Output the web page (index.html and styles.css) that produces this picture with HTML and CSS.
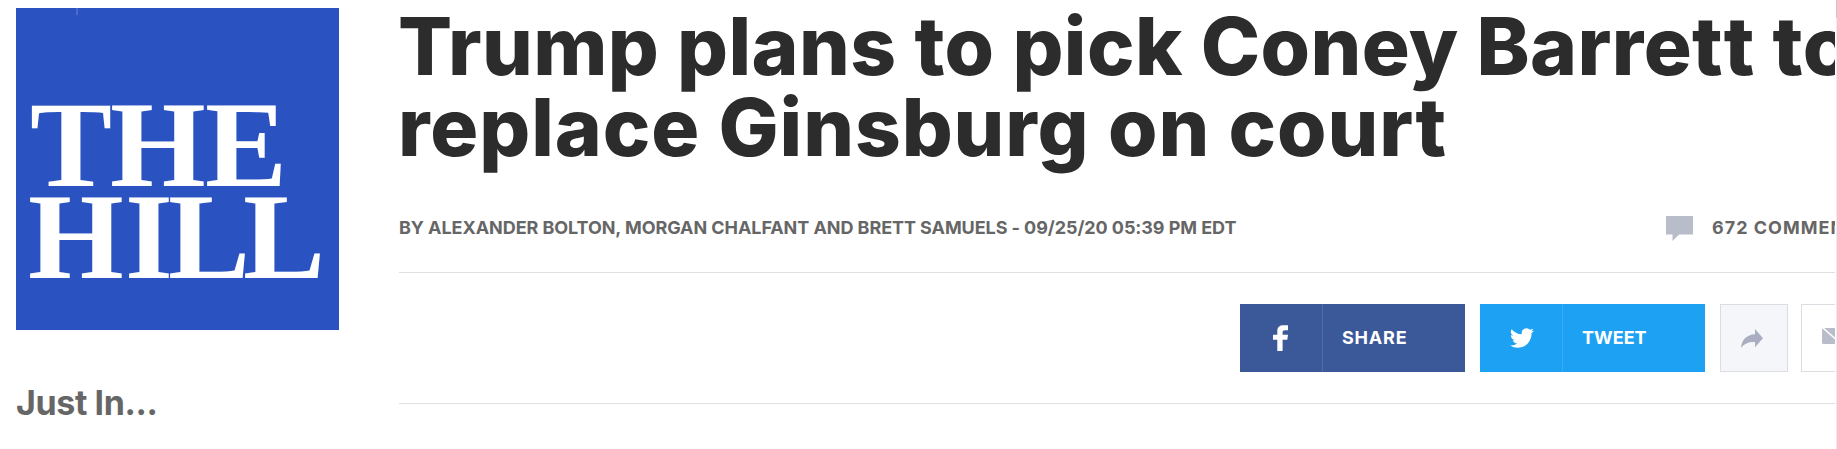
FILE: index.html
```
<!DOCTYPE html>
<html lang="en">
<head>
    <meta charset="UTF-8">
    <meta name="viewport" content="width=device-width, initial-scale=1.0">
    <title>The Hill</title>
    <link rel="stylesheet" href="styles.css">
</head>
<body>
    <div class="page">
        <aside class="sidebar">
            <svg class="logo" viewBox="0 0 323 322">
                <rect width="323" height="322" fill="#2a53c1"/>
                <rect x="60" y="0" width="2" height="7" fill="#4a6bc8"/>
                <text x="14 94 189" y="178">THE</text>
                <text x="12 109 152 227" y="269.500">HILL</text>
            </svg>
            <h2 class="justin">Just In...</h2>
        </aside>
        <main class="article">
            <h1 class="title">
                <span class="line line1">Trump plans to pick Coney Barre<span class="loose">t</span>t to</span>
                <span class="line line2">replace Ginsburg on court</span>
            </h1>
            <div class="meta">
                <span class="byline">BY ALEXANDER BOLTON, MORGAN CHALFANT AND BRETT SAMUELS - 09/25/20 05:39 PM EDT</span>
                <a class="comments">
                    <svg width="27" height="25" viewBox="0 0 27 25"><path d="M0 0h27v18.500H13L6.500 25v-6.500H0z" fill="#b9bdca"/></svg>
                    <span>672 COMMENTS</span>
                </a>
            </div>
            <div class="share">
                <a class="button facebook">
                    <span class="icon"><svg width="16" height="26" viewBox="0 0 16 26"><path d="M4.300 26V14.700H0V9.800h4.300V6.200C4.300 2.200 6.600.3 10.700.3H15v4.900h-3c-1.800 0-2.400.7-2.400 2.200v2.400H15l-.7 4.900H9.600V26z" fill="#fff"/></svg></span>
                    <span class="label">SHARE</span>
                </a>
                <a class="button twitter">
                    <span class="icon"><svg width="24" height="24" viewBox="0 0 24 24"><path d="M23.950 4.570a10 10 0 0 1-2.820.78 4.960 4.960 0 0 0 2.160-2.730c-.95.560-2 .96-3.130 1.190a4.920 4.920 0 0 0-8.380 4.480C7.690 8.090 4.070 6.130 1.640 3.160a4.920 4.920 0 0 0 1.520 6.570 4.900 4.900 0 0 1-2.230-.61v.06a4.920 4.920 0 0 0 3.950 4.830 5 5 0 0 1-2.210.08 4.940 4.940 0 0 0 4.600 3.420A9.870 9.870 0 0 1 0 19.540a13.990 13.990 0 0 0 7.550 2.210c9.050 0 14-7.500 14-13.980 0-.21 0-.42-.02-.63a9.940 9.940 0 0 0 2.460-2.550z" fill="#fff"/></svg></span>
                    <span class="label">TWEET</span>
                </a>
                <a class="square forward">
                    <svg width="22" height="19" viewBox="0 0 22 19"><path d="M14 0l8 9.300-8 9V13C8 12.700 3.500 14.500 0 19 .5 11 5.500 5.500 14 5.200z" fill="#a9aec0"/></svg>
                </a>
                <a class="square email">
                    <svg width="27" height="16" viewBox="0 0 27 16"><rect width="27" height="16" rx="1.500" fill="#b9bdca"/><path d="M1 0l12.500 11L26 0" fill="none" stroke="#fff" stroke-width="1.500"/></svg>
                </a>
            </div>
        </main>
        <div class="scrollbar"></div>
    </div>
</body>
</html>
```
FILE: styles.css
```
body {
    margin: 0;
    overflow: hidden;
    font-family: Inter, "Liberation Sans", sans-serif;
    background-color: #fff;
    color: #666;
}
.page {
    display: flex;
    height: 449px;
    width: 1837px;
}
.sidebar {
    flex: none;
    width: 323px;
    padding: 8px 60px 0 16px;
}
.logo {
    display: block;
    width: 323px;
    height: 322px;
}
.logo text {
    font-family: "Liberation Serif", serif;
    font-weight: bold;
    font-size: 123px;
    fill: #fff;
}
.justin {
    margin: 53px 0 0;
    font-size: 34px;
    line-height: 40px;
    font-weight: 700;
    letter-spacing: -0.4px;
}
.article {
    flex: none;
    width: 1436px;
    overflow: hidden;
}
.title {
    margin: 5px 0 0 -1px;
    font-size: 80px;
    line-height: 81px;
    font-weight: 850;
    color: #2c2c2c;
}
.line {
    display: block;
    white-space: nowrap;
}
.line1 {
    letter-spacing: 0.4px;
}
.line2 {
    letter-spacing: 0.9px;
}
.loose {
    letter-spacing: 1px;
}
.meta {
    display: flex;
    justify-content: space-between;
    align-items: center;
    height: 90px;
    margin-top: 15px;
    border-bottom: 1px solid #dedfe3;
    font-size: 18px;
    font-weight: 650;
    white-space: nowrap;
}
.byline {
    letter-spacing: -0.07px;
}
.comments {
    display: flex;
    gap: 19px;
    align-items: center;
    width: 169px;
    letter-spacing: 1px;
}
.comments svg {
    flex: none;
    margin-top: 2px;
}
.share {
    display: flex;
    height: 68px;
    padding: 31px 0 31px 841px;
    border-bottom: 1px solid #dedfe3;
}
.button {
    flex: none;
    display: flex;
    width: 225px;
    margin-right: 15px;
    color: #fff;
    font-size: 18px;
    font-weight: 700;
    line-height: 68px;
}
.facebook {
    background-color: #3b5998;
}
.twitter {
    background-color: #1da1f2;
}
.icon {
    display: flex;
    width: 82px;
    align-items: center;
    justify-content: center;
    border-right: 1px solid rgba(255, 255, 255, 0.12);
}
.twitter svg {
    margin-left: 2px;
}
.label {
    padding-left: 19px;
}
.facebook .label {
    letter-spacing: 0.8px;
}
.square {
    flex: none;
    display: flex;
    box-sizing: border-box;
    width: 68px;
    margin-right: 13px;
    align-items: center;
    justify-content: center;
    border: 1px solid #dcdde3;
}
.forward {
    padding-right: 4px;
    background-color: #f5f6f9;
}
.email svg {
    margin-bottom: 4px;
}
.scrollbar {
    width: 1px;
    margin-left: 1px;
    background: linear-gradient(#c8c8c8 18px, #ebebee 18px);
}
```
